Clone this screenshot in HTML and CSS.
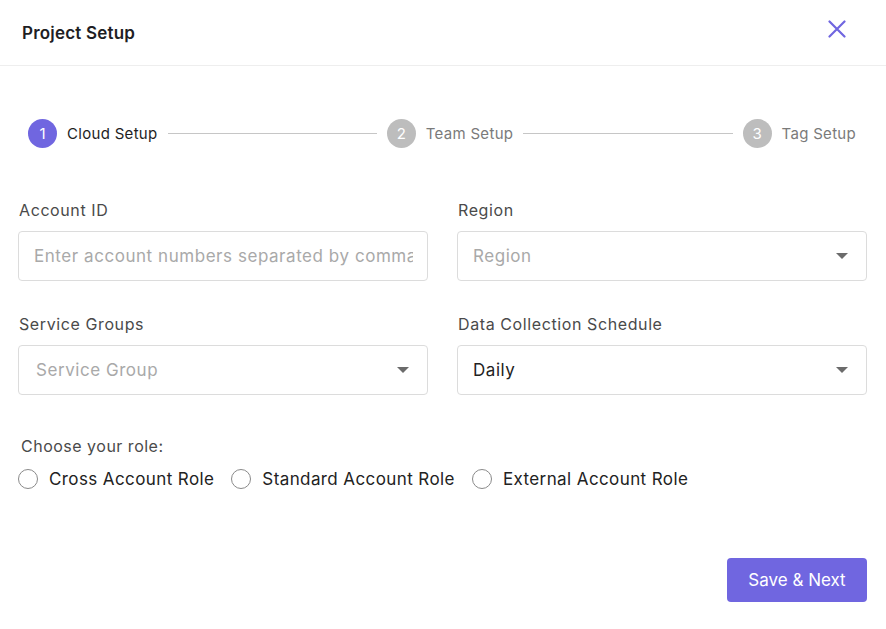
FILE: index.html
```html
<!DOCTYPE html>
<html lang="en">
<head>
<meta charset="utf-8">
<title>Project Setup</title>
<link rel="stylesheet" href="styles.css">
</head>
<body>
<div class="modal">
  <header class="modal-header">
    <h1 class="modal-title">Project Setup</h1>
    <button class="close-btn" aria-label="Close">
      <svg width="18" height="18" viewBox="0 0 18 18"><path d="M1.5 1.5 L16.5 16.5 M16.5 1.5 L1.5 16.5" stroke="#7066e0" stroke-width="2.2" stroke-linecap="round" fill="none"/></svg>
    </button>
  </header>

  <section class="modal-body">
    <div class="stepper">
      <div class="step active"><span class="step-num">1</span><span class="step-label">Cloud Setup</span></div>
      <div class="step-line"></div>
      <div class="step"><span class="step-num">2</span><span class="step-label">Team Setup</span></div>
      <div class="step-line"></div>
      <div class="step"><span class="step-num">3</span><span class="step-label">Tag Setup</span></div>
    </div>

    <div class="form-grid">
      <div class="field">
        <label class="field-label">Account ID</label>
        <div class="control"><span class="placeholder">Enter account numbers separated by comma</span></div>
      </div>
      <div class="field">
        <label class="field-label">Region</label>
        <div class="control select"><span class="placeholder">Region</span><span class="caret"></span></div>
      </div>
      <div class="field">
        <label class="field-label">Service Groups</label>
        <div class="control select sg"><span class="placeholder">Service Group</span><span class="caret"></span></div>
      </div>
      <div class="field">
        <label class="field-label">Data Collection Schedule</label>
        <div class="control select"><span class="value">Daily</span><span class="caret"></span></div>
      </div>
    </div>

    <div class="roles">
      <div class="roles-title">Choose your role:</div>
      <div class="role-options">
        <label class="role"><span class="radio"></span>Cross Account Role</label>
        <label class="role"><span class="radio"></span>Standard Account Role</label>
        <label class="role"><span class="radio"></span>External Account Role</label>
      </div>
    </div>
  </section>

  <footer class="modal-footer">
    <button class="primary-btn">Save &amp; Next</button>
  </footer>
</div>
</body>
</html>
```

FILE: styles.css
```css
* { box-sizing: border-box; }
html, body { margin: 0; padding: 0; background: #fff; }
body {
  font-family: Inter, "Noto Sans", sans-serif;
  color: #222;
  width: 886px;
  height: 629px;
  overflow: hidden;
}
.modal { display: flex; flex-direction: column; height: 629px; }

.modal-header {
  height: 66px;
  display: flex;
  align-items: center;
  justify-content: space-between;
  padding: 0 40px 0 22px;
  border-bottom: 1px solid #eeeeee;
}
.modal-title {
  margin: 0;
  font-size: 17px;
  font-weight: 600;
  color: #1e1e24;
  letter-spacing: 0.2px;
}
.close-btn {
  background: none;
  border: 0;
  padding: 0;
  width: 18px;
  height: 18px;
  display: flex;
  margin-top: -8px;
}

.modal-body { padding: 53px 19px 0 18px; flex: 1; }

.stepper {
  display: flex;
  align-items: center;
  padding: 0 11px 0 10px;
}
.step { display: flex; align-items: center; gap: 10px; }
.step-num {
  width: 29px; height: 29px;
  border-radius: 50%;
  background: #bdbdbd;
  color: #fff;
  font-size: 15px;
  display: flex; align-items: center; justify-content: center;
}
.step.active .step-num { background: #7066e0; }
.step-label { font-size: 15px; color: #7a7a7a; letter-spacing: 0.3px; }
.step.active .step-label { color: #1e1e24; }
.step-line { flex: 1; height: 1px; background: #c6c6c6; margin: 0 10px; }

.form-grid {
  display: grid;
  grid-template-columns: minmax(0, 1fr) minmax(0, 1fr);
  column-gap: 29px;
  row-gap: 33px;
  margin-top: 52px;
}
.field { min-width: 0; }
.field-label {
  display: block;
  font-size: 16px;
  color: #4a4a4a;
  margin: 0 0 11px 1px;
  line-height: 20px;
  letter-spacing: 0.6px;
}
.control {
  height: 50px;
  border: 1px solid #dcdcdc;
  border-radius: 4px;
  display: flex;
  align-items: center;
  padding: 0 14px 0 15px;
  font-size: 17px;
  letter-spacing: 0.55px;
  overflow: hidden;
  white-space: nowrap;
}
.control.sg { padding-left: 17px; }
.control.select { justify-content: space-between; padding-right: 18px; }
.placeholder { color: #a9a9a9; overflow: hidden; }
.value { color: #222; }
.caret {
  width: 0; height: 0;
  border-left: 6px solid transparent;
  border-right: 6px solid transparent;
  border-top: 6px solid #6b6b6b;
  flex: none;
}

.roles { margin-top: 41px; padding-left: 3px; }
.roles-title { font-size: 16px; color: #4a4a4a; line-height: 20px; letter-spacing: 0.5px; }
.role-options { display: flex; gap: 17px; margin-top: 11px; margin-left: -3px; }
.role {
  display: flex; align-items: center; gap: 11px;
  font-size: 17px; color: #222; line-height: 24px;
  letter-spacing: 0.4px;
}
.radio {
  width: 20px; height: 20px;
  border: 1px solid #8a8a8a;
  border-radius: 50%;
  flex: none;
}

.modal-footer {
  display: flex;
  justify-content: flex-end;
  padding: 0 19px 27px 0;
}
.primary-btn {
  width: 140px;
  height: 44px;
  border: 0;
  border-radius: 4px;
  background: #7066e0;
  color: #fff;
  font-family: inherit;
  font-size: 17px;
}
```
